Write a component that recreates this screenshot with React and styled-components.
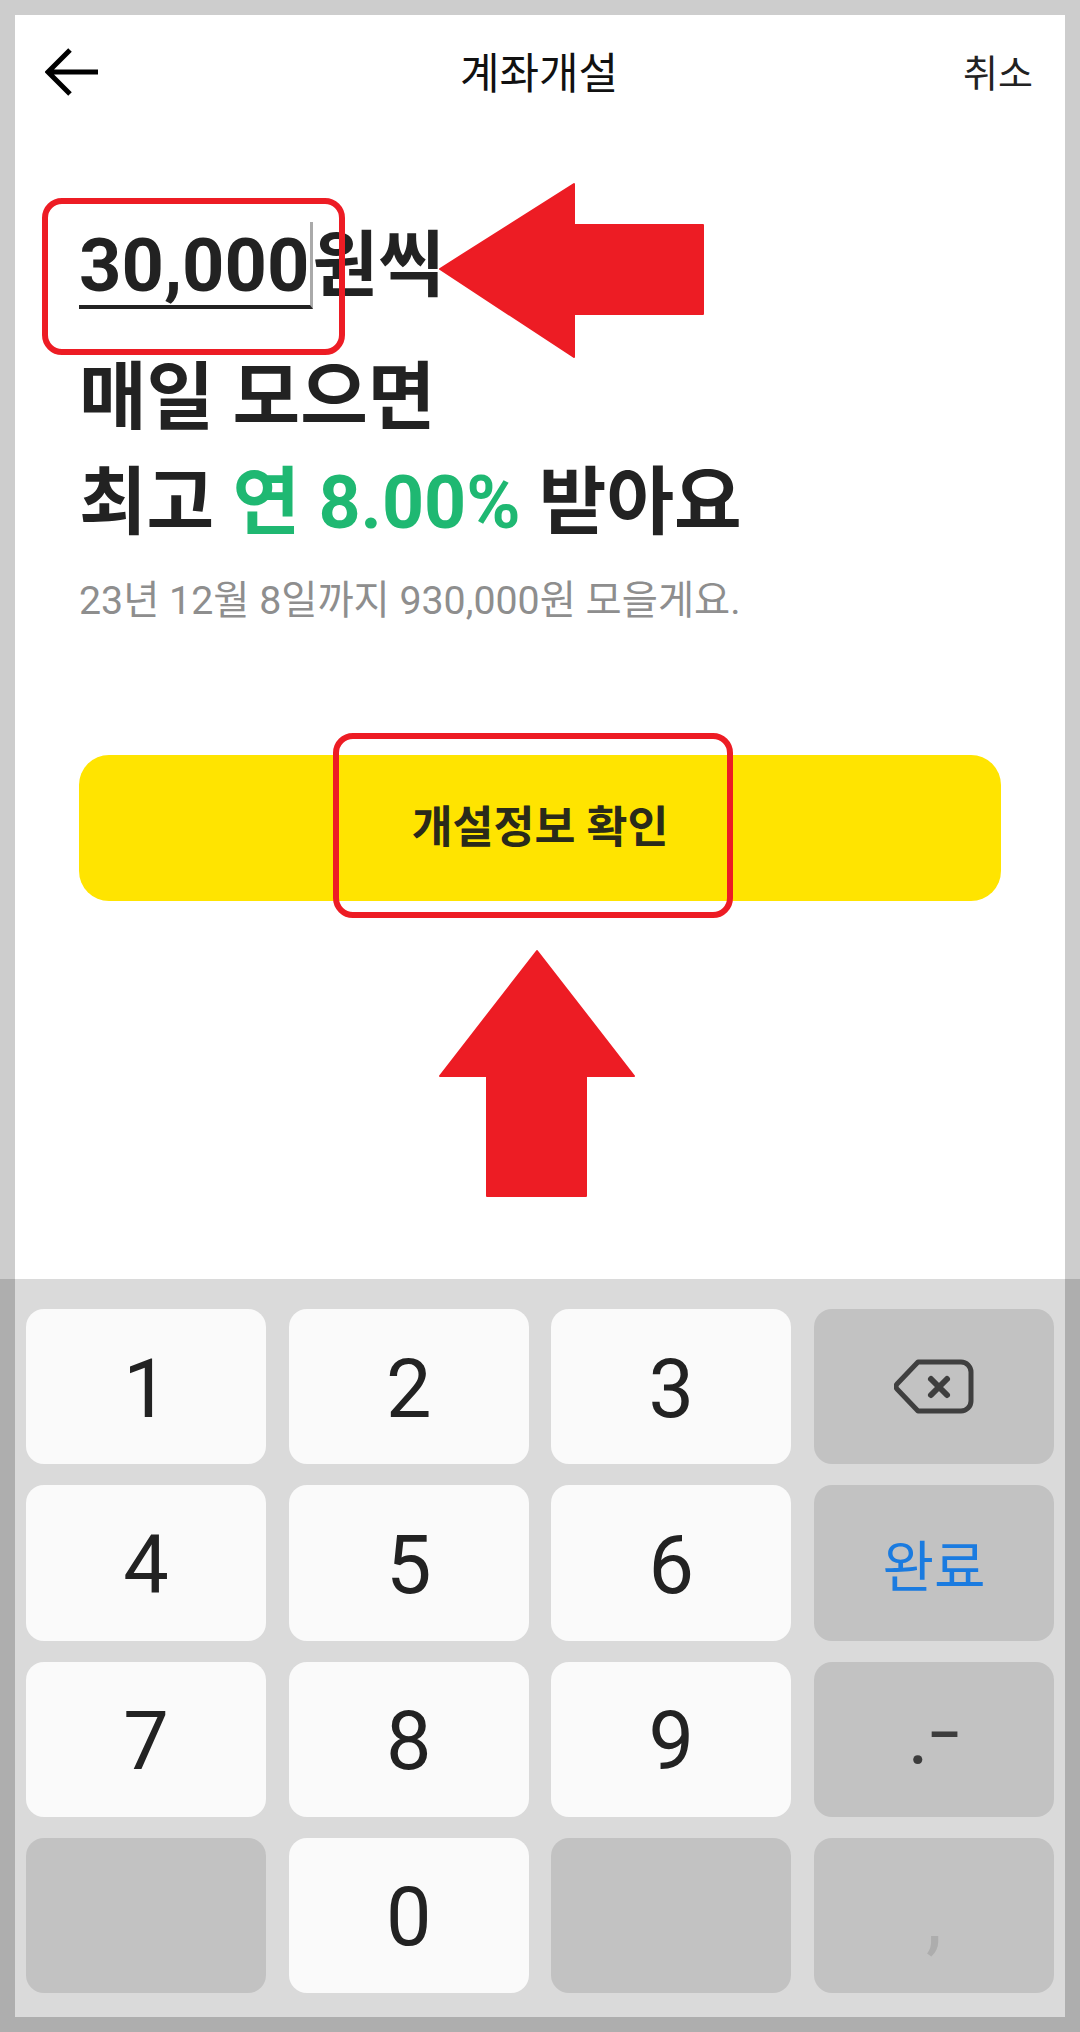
import React from "react";
import styled, { createGlobalStyle } from "styled-components";

const GlobalStyle = createGlobalStyle`
  html, body {
    margin: 0;
    padding: 0;
    background: #fff;
  }
  * {
    box-sizing: border-box;
  }
`;

const FONT = `Roboto, "Noto Sans CJK KR", sans-serif`;

const Page = styled.div`
  position: relative;
  width: 1080px;
  height: 2032px;
  display: flex;
  flex-direction: column;
  overflow: hidden;
  font-family: ${FONT};
  color: #222;
`;

const Screen = styled.div`
  height: 1279px;
  background: #fff;
  border: 15px solid #cdcdcd;
  border-bottom: 0;
`;

const Header = styled.header`
  height: 114px;
  padding: 0 32px 0 30px;
  display: grid;
  grid-template-columns: 1fr auto 1fr;
  align-items: center;
`;

const BackIcon = styled.svg`
  width: 54px;
  height: 52px;
  display: block;
`;

const Title = styled.h1`
  margin: 0 0 5px;
  font-size: 43px;
  font-weight: 400;
  color: #111;
`;

const Cancel = styled.span`
  justify-self: end;
  margin-bottom: 3px;
  font-size: 38px;
  color: #222;
`;

const Content = styled.div`
  padding: 84px 49px 0 64px;
`;

const Headline = styled.div`
  font-size: 73.500px;
  font-weight: 700;
  line-height: 105px;
  color: #222;
  white-space: nowrap;
`;

const AmountLine = styled(Headline)`
  display: flex;
  align-items: center;
  font-size: 71.500px;
  margin-bottom: 28px;
`;

const Amount = styled.span`
  font-size: 74px;
  line-height: 78px;
  padding-top: 5px;
  border-bottom: 4px solid #222;
  border-right: 3px solid #aaa;
`;

const Green = styled.span`
  color: #1fb872;
`;

const Sub = styled.p`
  margin: 19px 0 0;
  font-size: 39.300px;
  line-height: 52px;
  color: #8e8e8e;
  white-space: nowrap;
`;

const CheckButton = styled.button`
  display: block;
  width: 922px;
  height: 146px;
  margin-top: 128px;
  padding: 0 0 10px;
  border: 0;
  border-radius: 30px;
  background: #ffe400;
  font-family: ${FONT};
  font-size: 44.500px;
  font-weight: 700;
  color: #2a2a1a;
`;

const Keyboard = styled.div`
  flex: 1;
  background: #dadada;
  border: 15px solid #aeaeae;
  border-top: 0;
  padding: 30px 11px 24px;
  display: grid;
  grid-template-columns: repeat(4, 240px);
  grid-auto-rows: 1fr;
  column-gap: 22.67px;
  row-gap: 21px;
`;

const Key = styled.div`
  border-radius: 18px;
  background: ${(p) => (p.$dark ? "#c2c2c2" : "#fafafa")};
  color: ${(p) => p.$color || "#222"};
  font-size: ${(p) => p.$size || 81}px;
  padding-top: ${(p) => (p.$glyph ? 5 : 0)}px;
  display: flex;
  align-items: center;
  justify-content: center;
`;

const Punct = styled.span`
  margin-bottom: 20px;
`;

const Dash = styled.span`
  font-size: 110px;
  font-weight: 300;
  line-height: 1;
  vertical-align: -5px;
`;

const BackspaceIcon = styled.svg`
  width: 80px;
  height: 55px;
  display: block;
`;

// annotation layer drawn on top of the screenshot
const RedBox = styled.div`
  position: absolute;
  left: ${(p) => p.$x}px;
  top: ${(p) => p.$y}px;
  width: ${(p) => p.$w}px;
  height: ${(p) => p.$h}px;
  border: 6px solid #ed1c24;
  border-radius: 20px;
`;

const ArrowLayer = styled.svg`
  position: absolute;
  left: 0;
  top: 0;
  width: 1080px;
  height: 2032px;
  pointer-events: none;
`;

const KEYS = [
  { label: "1", glyph: true },
  { label: "2", glyph: true },
  { label: "3", glyph: true },
  { backspace: true, dark: true },
  { label: "4", glyph: true },
  { label: "5", glyph: true },
  { label: "6", glyph: true },
  { label: "완료", dark: true, color: "#1a7be0", size: 56 },
  { label: "7", glyph: true },
  { label: "8", glyph: true },
  { label: "9", glyph: true },
  { dot: true, dark: true, color: "#3c3c3c", glyph: true },
  { label: "", dark: true },
  { label: "0", glyph: true },
  { label: "", dark: true },
  { label: ",", dark: true, color: "#adadad", glyph: true },
];

const _renderKey = (key, id) => (
  <Key key={`key-${id}`} $dark={key.dark} $color={key.color} $size={key.size} $glyph={key.glyph}>
    {key.backspace && (
      <BackspaceIcon viewBox="0 0 80 55" fill="none" stroke="#3f3f3f" strokeWidth="5" strokeLinecap="round" strokeLinejoin="round">
        <path d="M24 3 H67 a10 10 0 0 1 10 10 V42 a10 10 0 0 1 -10 10 H24 L3 30 Q1 27.500 3 25 Z" />
        <path d="M37 20 L53 36 M53 20 L37 36" strokeWidth="6" />
      </BackspaceIcon>
    )}
    {key.dot && <Punct>.<Dash>-</Dash></Punct>}
    {key.label}
  </Key>
);

const App = () => (
  <Page>
    <GlobalStyle />
    <Screen>
      <Header>
        <BackIcon viewBox="0 0 54 52" fill="none" stroke="#000" strokeWidth="5">
          <path d="M53 26 H4 M25 4 L3 26 L25 48" />
        </BackIcon>
        <Title>계좌개설</Title>
        <Cancel>취소</Cancel>
      </Header>
      <Content>
        <AmountLine>
          <Amount>30,000</Amount>원씩
        </AmountLine>
        <Headline>매일 모으면</Headline>
        <Headline>최고 <Green>연 8.00%</Green> 받아요</Headline>
        <Sub>23년 12월 8일까지 930,000원 모을게요.</Sub>
        <CheckButton>개설정보 확인</CheckButton>
      </Content>
    </Screen>
    <Keyboard>{KEYS.map(_renderKey)}</Keyboard>

    <RedBox $x={42} $y={198} $w={303} $h={157} />
    <RedBox $x={333} $y={733} $w={400} $h={185} />
    <ArrowLayer viewBox="0 0 1080 2032" fill="#ed1c24" stroke="#ed1c24" strokeWidth="2" strokeLinejoin="round">
      <polygon points="440,269 574,184 574,225 703,225 703,314 574,314 574,357" />
      <polygon points="537,951 634,1076 586,1076 586,1196 487,1196 487,1076 440,1076" />
    </ArrowLayer>
  </Page>
);

export default App;
